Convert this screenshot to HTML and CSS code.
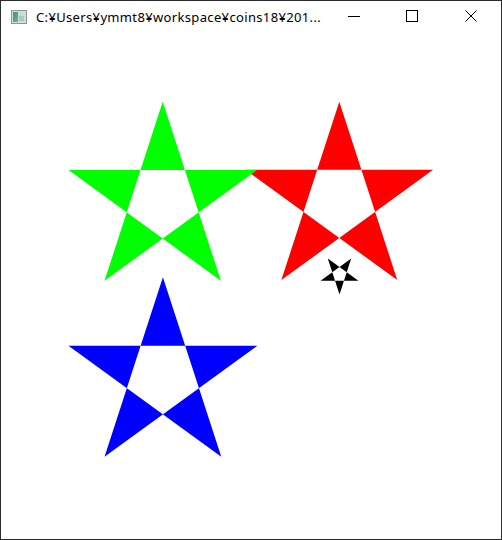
FILE: index.html
```html
<!DOCTYPE html>
<html>
<head>
<meta charset="utf-8">
<link rel="stylesheet" href="styles.css">
</head>
<body>
<div class="window">
  <div class="titlebar">
    <svg class="app-icon" width="16" height="14" viewBox="0 0 16 14">
      <defs>
        <linearGradient id="g1" x1="0" y1="0" x2="1" y2="1">
          <stop offset="0" stop-color="#3f8f8a"/>
          <stop offset="1" stop-color="#6fb39a"/>
        </linearGradient>
      </defs>
      <rect x="0.5" y="0.5" width="15" height="13" fill="#d9dede" stroke="#8a9696"/>
      <rect x="2" y="2" width="5" height="10" fill="url(#g1)"/>
      <rect x="7" y="2" width="7" height="10" fill="#c9ddd3"/>
      <rect x="8" y="6" width="5" height="5" fill="#a9cbbb"/>
    </svg>
    <div class="title">C:¥Users¥ymmt8¥workspace¥coins18¥201...</div>
    <div class="controls">
      <div class="btn btn-min">
        <svg width="12" height="12" viewBox="0 0 12 12"><path d="M0 6.5H12" stroke="#000" stroke-width="1"/></svg>
      </div>
      <div class="btn btn-max">
        <svg width="12" height="12" viewBox="0 0 12 12"><rect x="0.5" y="0.5" width="11" height="11" fill="none" stroke="#000" stroke-width="1"/></svg>
      </div>
      <div class="btn btn-close">
        <svg width="12" height="12" viewBox="0 0 12 12"><path d="M0.5 0.5L11.5 11.5M11.5 0.5L0.5 11.5" stroke="#000" stroke-width="1"/></svg>
      </div>
    </div>
  </div>
  <div class="canvas">
    <svg class="drawing" width="500" height="508" viewBox="1 31 500 508">
      <path fill="#ff0000" fill-rule="evenodd" d="M339.3 101.7 L397.26 280.07 L245.53 169.83 L433.07 169.83 L281.34 280.07 Z"/>
      <path fill="#00ff00" fill-rule="evenodd" d="M162.7 101.7 L220.89 280.79 L68.55 170.11 L256.85 170.11 L104.51 280.79 Z"/>
      <path fill="#0000ff" fill-rule="evenodd" d="M162.9 277.2 L221.27 456.84 L68.46 345.81 L257.34 345.81 L104.53 456.84 Z"/>
      <path fill="#000000" fill-rule="evenodd" d="M339.5 294.5 L327.8 258.6 L358.4 280.8 L320.6 280.8 L351.2 258.6 Z"/>
    </svg>
  </div>
</div>
</body>
</html>
```

FILE: styles.css
```css
html, body {
  margin: 0;
  padding: 0;
  background: #ffffff;
}
.window {
  width: 502px;
  height: 540px;
  box-sizing: border-box;
  border: 1px solid #2b2b2b;
  display: flex;
  flex-direction: column;
  background: #ffffff;
  overflow: hidden;
}
.titlebar {
  height: 30px;
  display: flex;
  align-items: center;
  flex: none;
}
.app-icon {
  margin-left: 10px;
  margin-top: 1px;
  flex: none;
}
.title {
  margin-left: 9px;
  font-family: "Noto Sans", "Open Sans", sans-serif;
  font-size: 13px;
  letter-spacing: 0.35px;
  color: #000;
  white-space: nowrap;
  flex: 1;
  padding-top: 1px;
}
.controls {
  display: flex;
  height: 30px;
  flex: none;
}
.btn {
  height: 30px;
  display: flex;
  align-items: center;
  justify-content: center;
}
.btn svg { display: block; }
.btn-min { width: 56px; }
.btn-max { width: 59px; }
.btn-close { width: 60px; }
.canvas {
  flex: 1;
  display: flex;
}
.drawing {
  display: block;
}
```
